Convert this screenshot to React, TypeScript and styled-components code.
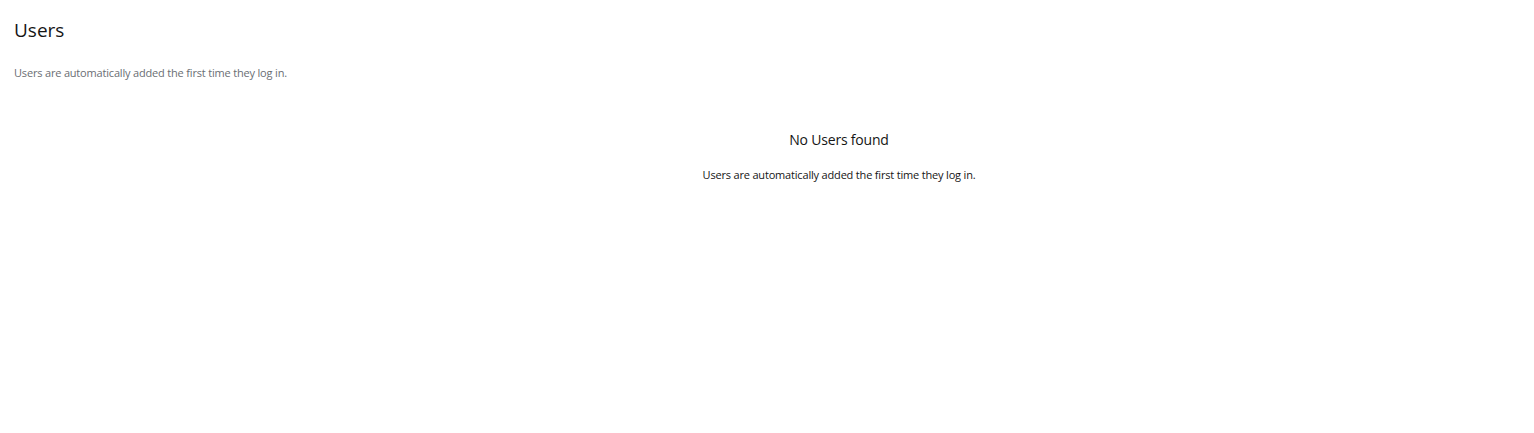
import React from "react";
import styled, { createGlobalStyle } from "styled-components";

const Global = createGlobalStyle`
  body {
    margin: 0;
    background: #fff;
    font-family: "Open Sans", "Liberation Sans", sans-serif;
  }
`;

const Page = styled.main`
  display: flex;
  flex-direction: column;
  padding: 16px 14px 0 14px;
`;

const Title = styled.h1`
  margin: 0;
  font-size: 19px;
  font-weight: 500;
  color: #151515;
  line-height: 28px;
`;

const Subtitle = styled.p`
  margin: 21px 0 0;
  font-size: 11px;
  letter-spacing: -0.18px;
  color: #6a6e73;
  line-height: 16px;
`;

const EmptyState = styled.section`
  display: flex;
  flex-direction: column;
  align-items: center;
  margin: 48px 0 0 144px;
`;

const EmptyTitle = styled.h2`
  margin: 0;
  font-size: 14px;
  font-weight: 400;
  letter-spacing: -0.2px;
  color: #151515;
  line-height: 22px;
`;

const EmptyBody = styled.p`
  margin: 16px 0 0;
  font-size: 11px;
  letter-spacing: -0.18px;
  color: #151515;
  line-height: 16px;
`;

export default function App() {
  return (
    <>
      <Global />
      <Page>
        <Title>Users</Title>
        <Subtitle>Users are automatically added the first time they log in.</Subtitle>
        <EmptyState>
          <EmptyTitle>No Users found</EmptyTitle>
          <EmptyBody>Users are automatically added the first time they log in.</EmptyBody>
        </EmptyState>
      </Page>
    </>
  );
}
